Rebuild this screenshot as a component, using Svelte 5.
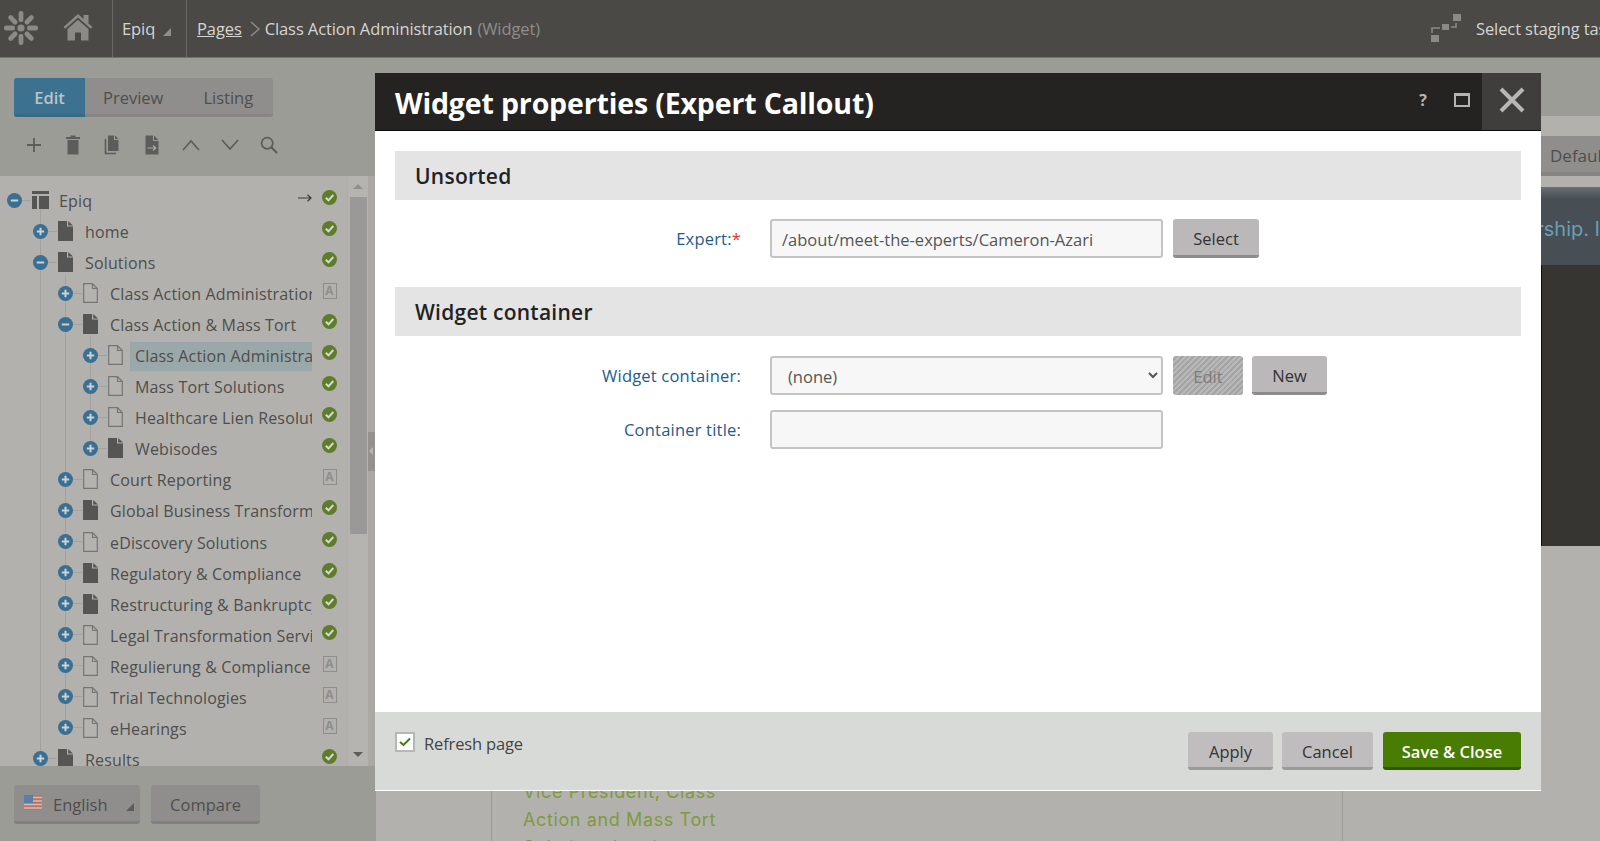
<script>
  const rows = [
    { t: 'Epiq', l: 0, open: true, icon: 'root', s: 'ok', arrow: true },
    { t: 'home', l: 1, icon: 'full', s: 'ok' },
    { t: 'Solutions', l: 1, open: true, icon: 'full', s: 'ok' },
    { t: 'Class Action Administration', l: 2, icon: 'line', s: 'a' },
    { t: 'Class Action & Mass Tort', l: 2, open: true, icon: 'full', s: 'ok' },
    { t: 'Class Action Administration', l: 3, icon: 'line', s: 'ok', sel: true },
    { t: 'Mass Tort Solutions', l: 3, icon: 'line', s: 'ok' },
    { t: 'Healthcare Lien Resolution', l: 3, icon: 'line', s: 'ok' },
    { t: 'Webisodes', l: 3, icon: 'full', s: 'ok' },
    { t: 'Court Reporting', l: 2, icon: 'line', s: 'a' },
    { t: 'Global Business Transformation', l: 2, icon: 'full', s: 'ok' },
    { t: 'eDiscovery Solutions', l: 2, icon: 'line', s: 'ok' },
    { t: 'Regulatory & Compliance', l: 2, icon: 'full', s: 'ok' },
    { t: 'Restructuring & Bankruptcy', l: 2, icon: 'full', s: 'ok' },
    { t: 'Legal Transformation Services', l: 2, icon: 'line', s: 'ok' },
    { t: 'Regulierung & Compliance', l: 2, icon: 'line', s: 'a' },
    { t: 'Trial Technologies', l: 2, icon: 'line', s: 'a' },
    { t: 'eHearings', l: 2, icon: 'line', s: 'a' },
    { t: 'Results', l: 1, icon: 'full', s: 'ok' }
  ];
  const spokes = [0, 45, 90, 135, 180, 225, 270, 315];
</script>

<div class="page">
  <header class="topbar">
    <div class="brand">
      <svg class="logo" viewBox="0 0 36 36" width="36" height="36">
        {#each spokes as a}
          <rect x="15.6" y="1" width="4.8" height="11" rx="2.2" fill="#8b8a87" transform="rotate({a} 18 18)" />
        {/each}
        <circle cx="18" cy="18" r="3.6" fill="#8b8a87" />
      </svg>
      <svg class="home" viewBox="0 0 30 28" width="30" height="28">
        <path d="M0.5 14 L15 1 L20.5 6 V2 H25.5 V10.5 L29.5 14 L27.8 15.8 L15 4.6 L2.2 15.8 Z" fill="#8b8a87" />
        <path d="M4.5 16 L15 6.8 L25.5 16 V27.5 H18 V19.5 H12 V27.5 H4.5 Z" fill="#8b8a87" />
      </svg>
    </div>
    <div class="site">Epiq <span class="corner"></span></div>
    <nav class="crumbs">
      <a href="#pages">Pages</a>
      <svg class="gt" viewBox="0 0 10 16" width="10" height="16"><path d="M1 1 L9 8 L1 15" fill="none" stroke="#8f8e8b" stroke-width="1.4" /></svg>
      <span>Class Action Administration</span>
      <span class="dim">(Widget)</span>
    </nav>
    <div class="staging">
      <svg viewBox="0 0 32 30" width="32" height="30">
        <rect x="1" y="22" width="8" height="7" fill="#8b8a87" />
        <rect x="12" y="11" width="7" height="6" fill="#8b8a87" />
        <rect x="23" y="1" width="8" height="7" fill="#8b8a87" />
        <path d="M2 20 V15 H10 M21 14 H26 V10" fill="none" stroke="#8b8a87" stroke-width="1.6" />
      </svg>
      <span>Select staging task group</span>
    </div>
  </header>

  <div class="workspace">
    <aside class="side">
      <div class="tabs">
        <span class="tab on">Edit</span>
        <span class="tab prev">Preview</span>
        <span class="tab list">Listing</span>
      </div>
      <div class="tools">
        <svg viewBox="0 0 16 16" width="16" height="16"><path d="M8 1 V15 M1 8 H15" stroke="#5c5c5a" stroke-width="1.8" fill="none" /></svg>
        <svg viewBox="0 0 16 20" width="16" height="20"><path d="M5.5 0.5 H10.5 V2 H15 V4 H1 V2 H5.5 Z M2.5 5 H13.5 V19.5 H2.5 Z" fill="#5c5c5a" /></svg>
        <svg viewBox="0 0 16 20" width="16" height="20"><path d="M4 0.5 H10 V5 H14.5 V16 H4 Z M11 0.5 L14.5 4 H11 Z" fill="#5c5c5a" /><path d="M1.5 4 V18.5 H12" fill="none" stroke="#5c5c5a" stroke-width="1.6" /></svg>
        <svg viewBox="0 0 16 20" width="16" height="20"><path d="M1.5 0.5 H9 V6 H14.5 V19.5 H1.5 Z M10 0.5 L14.5 5 H10 Z" fill="#5c5c5a" /><path d="M3.5 13 H11.5 M9 10.5 L11.8 13 L9 15.5" fill="none" stroke="#a9a8a4" stroke-width="1.2" /></svg>
        <svg viewBox="0 0 18 12" width="18" height="12"><path d="M1 11 L9 2 L17 11" fill="none" stroke="#5c5c5a" stroke-width="1.7" /></svg>
        <svg viewBox="0 0 18 12" width="18" height="12"><path d="M1 1 L9 10 L17 1" fill="none" stroke="#5c5c5a" stroke-width="1.7" /></svg>
        <svg viewBox="0 0 18 18" width="18" height="18"><circle cx="7.2" cy="7.2" r="5.6" fill="none" stroke="#5c5c5a" stroke-width="1.7" /><path d="M11.3 11.3 L17 17" stroke="#5c5c5a" stroke-width="2.1" /></svg>
      </div>
      <div class="treewrap">
        <div class="tree">
          <span class="guide g1"></span>
          <span class="guide g2"></span>
          <span class="guide g3"></span>
          {#each rows as r}
            <div class="row l{r.l}">
              <span class="toggle">
                <svg viewBox="0 0 15 15" width="15" height="15">
                  <circle cx="7.5" cy="7.5" r="7.5" fill="#3a6f92" />
                  <path d={r.open ? 'M3.8 7.5 H11.2' : 'M3.8 7.5 H11.2 M7.5 3.8 V11.2'} stroke="#c9d2d6" stroke-width="2" />
                </svg>
              </span>
              <span class="doc">
                {#if r.icon === 'root'}
                  <svg viewBox="0 0 17 18" width="17" height="18"><path d="M0 0 H17 V3 H0 Z M0 5 H5 V18 H0 Z M7 5 H17 V18 H7 Z" fill="#555553" /></svg>
                {:else if r.icon === 'full'}
                  <svg viewBox="0 0 15 20" width="15" height="20"><path d="M0 0 H9 V5.5 H15 V20 H0 Z M10.2 0 L15 4.4 H10.2 Z" fill="#555553" /></svg>
                {:else}
                  <svg viewBox="0 0 15 20" width="15" height="20"><path d="M0.7 0.7 H9.5 L14.3 5.5 V19.3 H0.7 Z M9.5 0.7 V5.5 H14.3" fill="#b4b3b0" stroke="#757573" stroke-width="1.2" /></svg>
                {/if}
              </span>
              <span class="label" class:sel={r.sel}>{r.t}</span>
              <span class="status">
                {#if r.arrow}
                  <svg class="arrow" viewBox="0 0 14 8" width="14" height="8"><path d="M0 4 H13 M9.5 0.8 L13 4 L9.5 7.2" fill="none" stroke="#3c3c3a" stroke-width="1.2" /></svg>
                {/if}
                {#if r.s === 'ok'}
                  <svg viewBox="0 0 15 15" width="15" height="15"><circle cx="7.5" cy="7.5" r="7.5" fill="#5d7d2c" /><path d="M3.8 7.7 L6.5 10.3 L11.3 5" fill="none" stroke="#d6d9cf" stroke-width="2" /></svg>
                {:else}
                  <span class="lang">A</span>
                {/if}
              </span>
            </div>
          {/each}
        </div>
        <div class="scroll">
          <span class="up"></span>
          <span class="thumb"></span>
          <span class="down"></span>
        </div>
        <div class="split"><span class="grip"></span></div>
      </div>
      <div class="sidefoot">
        <button class="btn dim-btn lang-btn">
          <svg viewBox="0 0 18 15" width="18" height="15">
            <rect width="18" height="15" rx="1" fill="#c0705c" />
            <path d="M0 2.5 H18 M0 6 H18 M0 9.5 H18 M0 13 H18" stroke="#c9c0b8" stroke-width="1.4" />
            <rect width="9" height="8" fill="#5a7ea8" />
          </svg>
          English
          <span class="corner shade"></span>
        </button>
        <button class="btn dim-btn cmp">Compare</button>
      </div>
    </aside>

    <main class="main">
      <div class="strip"></div>
      <div class="gap20"></div>
      <div class="bar"><span class="default">Default</span></div>
      <div class="gap10"></div>
      <div class="band"><span>leadership. I</span></div>
      <div class="dark"></div>
      <div class="content">
        <div class="column">
          <p>Vice President, Class<br />Action and Mass Tort<br />Solutions Lead</p>
        </div>
      </div>
    </main>
  </div>

  <section class="modal">
    <div class="mtitle">
      <h1>Widget properties (Expert Callout)</h1>
      <span class="q">?</span>
      <span class="max"></span>
      <span class="close">
        <svg viewBox="0 0 26 26" width="26" height="26"><path d="M2 2 L24 24 M24 2 L2 24" stroke="#b8b7b4" stroke-width="4" /></svg>
      </span>
    </div>
    <div class="mbody">
      <h2>Unsorted</h2>
      <div class="field first">
        <label for="expert">Expert:<em>*</em></label>
        <input id="expert" value="/about/meet-the-experts/Cameron-Azari" />
        <button class="btn">Select</button>
      </div>
      <h2 class="second">Widget container</h2>
      <div class="field wide">
        <label for="wc">Widget container:</label>
        <select id="wc"><option>(none)</option></select>
        <button class="btn hatch">Edit</button>
        <button class="btn new">New</button>
      </div>
      <div class="field tight">
        <label for="ct">Container title:</label>
        <input id="ct" />
      </div>
    </div>
    <div class="mfoot">
      <span class="check">
        <svg viewBox="0 0 12 10" width="12" height="10"><path d="M1 5 L4.5 8 L11 1.5" fill="none" stroke="#3f7f0a" stroke-width="2" /></svg>
      </span>
      <span class="refresh">Refresh page</span>
      <button class="btn lite apply">Apply</button>
      <button class="btn lite cancel">Cancel</button>
      <button class="btn save">Save &amp; Close</button>
    </div>
  </section>
</div>

<style>
  :global(body) {
    margin: 0;
    overflow: hidden;
    background: #b2b1ae;
  }
  .page {
    position: relative;
    width: 1600px;
    height: 841px;
    overflow: hidden;
    font-family: "Open Sans", "Noto Sans", sans-serif;
    font-size: 16.5px;
    color: #4e4e4c;
  }

  .topbar {
    display: flex;
    align-items: stretch;
    height: 57px;
    background: #4a4945;
    border-bottom: 1px solid #73726d;
    box-sizing: content-box;
    color: #d5d5d2;
    letter-spacing: -0.1px;
  }
  .brand {
    display: flex;
    align-items: center;
    width: 113px;
    border-right: 1px solid #6a6964;
    box-sizing: border-box;
  }
  .logo { margin: -2px 0 0 3px; }
  .home { margin: -3px 0 0 24px; }
  .site {
    display: flex;
    align-items: center;
    width: 74px;
    padding-left: 9px;
    gap: 8px;
    border-right: 1px solid #6a6964;
    box-sizing: border-box;
  }
  .corner {
    width: 0;
    height: 0;
    margin-top: 6px;
    border-left: 8px solid transparent;
    border-bottom: 8px solid #8f8e8b;
  }
  .corner.shade { border-bottom-color: #5c5c5a; margin-left: 7px; }
  .crumbs {
    display: flex;
    align-items: center;
    padding-left: 10px;
    gap: 5px;
    white-space: nowrap;
  }
  .crumbs a { color: #d5d5d2; text-decoration: underline; }
  .gt { margin: 0 0 0 3px; }
  .dim { color: #8f8e8b; }
  .staging {
    display: flex;
    align-items: center;
    gap: 14px;
    margin-left: auto;
    width: 170px;
    white-space: nowrap;
    padding-bottom: 1px;
    box-sizing: border-box;
  }
  .staging svg { flex: none; }

  .workspace {
    display: flex;
    height: 783px;
  }
  .side {
    display: flex;
    flex-direction: column;
    width: 376px;
    flex: none;
    background: #9c9c96;
  }
  .tabs {
    display: flex;
    width: 259px;
    height: 39px;
    margin: 20px 0 0 14px;
    background: #8f8e8c;
    border-bottom: 3px solid #868583;
    border-radius: 3px;
    box-sizing: border-box;
  }
  .tab { line-height: 40px; }
  .tab.on {
    width: 71px;
    text-align: center;
    background: #3d7190;
    color: #b9c5cb;
    font-weight: 600;
    border-bottom: 3px solid #386883;
    height: 39px;
    box-sizing: border-box;
    border-radius: 3px 0 0 3px;
  }
  .tab.prev { margin-left: 18px; }
  .tab.list { margin-left: 40px; }
  .tools {
    display: grid;
    grid-template-columns: repeat(7, 39.2px);
    justify-items: center;
    align-items: center;
    height: 59px;
    box-sizing: border-box;
    padding: 0 0 3px 14.5px;
  }

  .treewrap {
    display: flex;
    flex: none;
    height: 590px;
    background: #b2b1ae;
  }
  .tree {
    position: relative;
    width: 347px;
    flex: none;
    padding-top: 10px;
    overflow: hidden;
    box-sizing: border-box;
  }
  .guide {
    position: absolute;
    width: 1px;
    background: #a3a29f;
  }
  .g1 { left: 39.5px; top: 25px; height: 560px; }
  .g2 { left: 64.5px; top: 100px; height: 450px; }
  .g3 { left: 89.5px; top: 160px; height: 115px; }
  .row {
    position: relative;
    display: flex;
    align-items: center;
    height: 31.05px;
    white-space: nowrap;
  }
  .l0 { padding-left: 6.5px; }
  .l1 { padding-left: 32.5px; }
  .l2 { padding-left: 57.5px; }
  .l3 { padding-left: 82.5px; }
  .toggle {
    position: relative;
    flex: none;
    width: 15px;
    height: 15px;
    margin: -3px 10.5px 0 0;
  }
  .toggle svg { display: block; }
  .toggle::after {
    content: "";
    position: absolute;
    left: 15px;
    top: 7px;
    width: 9px;
    height: 1px;
    background: #a3a29f;
  }
  .doc { flex: none; display: flex; margin-top: -3px; }
  .label {
    flex: 1;
    min-width: 0;
    margin-left: 7px;
    padding-left: 5px;
    line-height: 29px;
    overflow: hidden;
    letter-spacing: 0.15px;
    font-size: 16px;
  }
  .l0 .label { margin-left: 5px; }
  .label.sel { background: #9aa8a9; }
  .status {
    position: relative;
    flex: none;
    display: flex;
    justify-content: center;
    width: 35px;
    margin-top: -8px;
  }
  .arrow { position: absolute; left: -14px; top: 4px; }
  .lang {
    width: 12px;
    height: 14px;
    margin-top: 1px;
    border: 1px solid #8f8e8b;
    color: #8f8e8b;
    font-size: 12px;
    font-weight: 700;
    line-height: 14px;
    text-align: center;
    box-sizing: content-box;
  }
  .scroll {
    position: relative;
    width: 21px;
    flex: none;
    background: #b5b4b1;
    border-left: 1px solid #aeadaa;
    box-sizing: border-box;
  }
  .thumb {
    position: absolute;
    left: 2px;
    top: 21px;
    width: 17px;
    height: 337px;
    background: #9a9997;
  }
  .up, .down {
    position: absolute;
    left: 5px;
    width: 0;
    height: 0;
    border-left: 5px solid transparent;
    border-right: 5px solid transparent;
  }
  .up { top: 8px; border-bottom: 5px solid #91908e; }
  .down { top: 576px; border-top: 5px solid #5c5c5a; }
  .split {
    position: relative;
    flex: 1;
    background: #a9a8a5;
  }
  .grip {
    position: absolute;
    left: 0;
    top: 256px;
    width: 7px;
    height: 39px;
    background: #93928f;
  }
  .grip::after {
    content: "";
    position: absolute;
    left: 1px;
    top: 15px;
    border-top: 4px solid transparent;
    border-bottom: 4px solid transparent;
    border-right: 4px solid #b8b7b4;
  }
  .sidefoot {
    display: flex;
    gap: 11px;
    padding: 19px 0 0 14px;
  }

  .btn {
    height: 39px;
    padding: 2px 0 0;
    border: 0;
    border-bottom: 3px solid #8d8c8c;
    border-radius: 3px;
    background: #bab8b9;
    color: #333;
    font-family: inherit;
    font-size: 16.5px;
    box-sizing: border-box;
  }
  .dim-btn {
    background: #8f8e8c;
    border-bottom-color: #80807e;
    color: #4e4e4c;
  }
  .lang-btn {
    display: flex;
    align-items: center;
    gap: 11px;
    width: 126px;
    padding-left: 10px;
  }
  .lang-btn svg { flex: none; margin-top: -4px; }
  .cmp { width: 109px; }

  .main {
    flex: 1;
    min-width: 0;
    background: #b2b1ae;
    overflow: hidden;
  }
  .strip { height: 58px; background: #9c9c96; }
  .gap20 { height: 20px; }
  .gap10 { height: 11px; }
  .bar {
    display: flex;
    height: 40px;
    background: #8f8e8c;
    border-bottom: 4px solid #858482;
    box-sizing: border-box;
    padding: 3px 0 0 1174px;
    font-size: 17px;
    line-height: 34px;
    color: #4e4e4c;
  }
  .band {
    display: flex;
    justify-content: flex-end;
    align-items: center;
    height: 78px;
    box-sizing: border-box;
    padding-top: 6px;
    background: linear-gradient(#6c6f72, #474e54 12px);
    color: #6a9fb5;
    font-family: "Inter", sans-serif;
    font-size: 20px;
    white-space: nowrap;
    overflow: hidden;
    margin-right: -80px;
  }
  .band span { margin-right: 80px; }
  .dark {
    position: relative;
    height: 281px;
    background: #363532;
  }
  .dark::after {
    content: "";
    position: absolute;
    left: 1165px;
    top: 0;
    width: 1px;
    height: 100%;
    background: #0f0f0e;
  }
  .content {
    padding-left: 115px;
  }
  .column {
    width: 852px;
    height: 300px;
    border: 1px solid #9b9a97;
    border-width: 0 1px;
    box-sizing: border-box;
    padding: 232px 0 0 31px;
  }
  .column p {
    margin: 0;
    font-family: "Inter", sans-serif;
    font-size: 18px;
    line-height: 28px;
    letter-spacing: 0.62px;
    color: #7f9a3f;
  }

  .modal {
    position: absolute;
    left: 375px;
    top: 73px;
    width: 1166px;
    height: 718px;
    display: flex;
    flex-direction: column;
    background: #fff;
  }
  .mtitle {
    display: flex;
    align-items: center;
    flex: none;
    height: 58px;
    background: #242321;
    border-bottom: 1px solid #0c0c0b;
    box-sizing: border-box;
  }
  h1 {
    margin: 2px 0 0 20px;
    font-size: 28.5px;
    font-weight: 700;
    color: #fff;
    letter-spacing: -0.15px;
    white-space: nowrap;
    flex: 1;
  }
  .q {
    width: 14px;
    margin: -4px 24px 0 0;
    color: #b5b4b1;
    font-weight: 700;
    font-size: 16px;
    text-align: center;
  }
  .max {
    width: 16px;
    height: 14px;
    margin: -4px 12px 0 0;
    border: 2px solid #b5b4b1;
    border-top-width: 3px;
    box-sizing: border-box;
  }
  .close {
    display: flex;
    align-items: center;
    justify-content: center;
    width: 59px;
    height: 100%;
    background: #3f3e3c;
  }
  .close svg { margin-top: -4px; }
  .mbody {
    flex: 1;
    padding: 20px 20px 0 20px;
  }
  h2 {
    margin: 0;
    height: 49px;
    padding-left: 20px;
    line-height: 51px;
    background: #e4e4e4;
    color: #222;
    font-size: 21px;
    font-weight: 600;
    letter-spacing: 0.25px;
  }
  h2.second { margin-top: 29px; }
  .field {
    display: flex;
    align-items: center;
    gap: 10px;
    height: 39px;
  }
  .field.first { margin-top: 19px; }
  .field.wide { margin-top: 20px; }
  .field.tight { margin-top: 15px; }
  .field label {
    width: 346px;
    margin-right: 19px;
    text-align: right;
    color: #1d5c8c;
    font-weight: 500;
    font-size: 16.5px;
    letter-spacing: 0.2px;
  }
  em { color: #e8343a; font-style: normal; }
  input, select {
    width: 393px;
    height: 39px;
    box-sizing: border-box;
    background: #f7f7f7;
    border: 2px solid #c4c4c4;
    border-radius: 3px;
    padding: 2px 10px 0;
    color: #555;
    font-family: inherit;
    font-size: 16.5px;
    outline: none;
  }
  select { padding: 2px 8px 0 12px; }
  .field .btn { width: 86px; }
  .field .hatch {
    width: 70px;
    color: #7c7b7b;
    background: repeating-linear-gradient(135deg, #b9b8b8 0 2px, #a5a4a4 2px 4px);
    border-bottom: 0;
  }
  .field .new { width: 75px; margin-left: -1px; }
  .mfoot {
    display: flex;
    align-items: flex-start;
    flex: none;
    height: 79px;
    box-sizing: border-box;
    padding: 20px 20px 0 20px;
    background: #d8dad7;
    border-bottom: 1px solid #fff;
  }
  .check {
    display: flex;
    align-items: center;
    justify-content: center;
    width: 20px;
    height: 20px;
    box-sizing: border-box;
    background: #fff;
    border: 2px solid #b6b6b6;
  }
  .refresh {
    margin-left: 9px;
    line-height: 24px;
    letter-spacing: -0.15px;
    color: #444;
  }
  .lite {
    height: 38px;
    padding-top: 3px;
    background: #bfbdbe;
    border-bottom-color: #9a9a9a;
  }
  .apply { margin-left: auto; width: 85px; }
  .cancel { margin-left: 9px; width: 91px; }
  .save {
    margin-left: 10px;
    width: 138px;
    height: 38px;
    padding-top: 3px;
    background: #487c03;
    border-bottom-color: #2e5800;
    color: #fff;
    font-weight: 600;
  }
</style>
